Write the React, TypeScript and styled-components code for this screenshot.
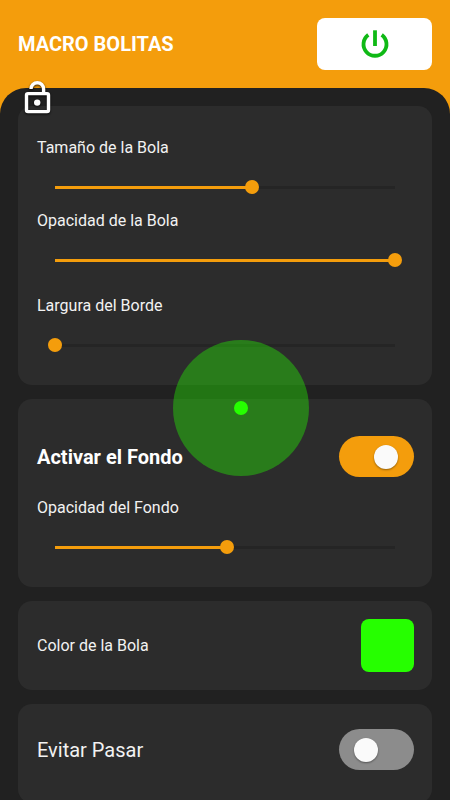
import React, { useId, useState } from "react";
import styled, { createGlobalStyle } from "styled-components";

const ACCENT = "#f49d0c";
const BALL = "#26ff00";

const GlobalStyle = createGlobalStyle`
  *, *::before, *::after { box-sizing: border-box; }
  body {
    margin: 0;
    background: #212121;
    color: #f2f2f2;
    font-family: Roboto, sans-serif;
  }
  button, input { font: inherit; }
`;

const Screen = styled.div`
  position: relative;
  display: flex;
  flex-direction: column;
  height: 100vh;
  overflow: hidden;
  background: ${ACCENT};
`;

const Header = styled.header`
  display: flex;
  align-items: center;
  justify-content: space-between;
  padding: 18px;
`;

const AppTitle = styled.h1`
  margin: 0;
  color: #fff;
  font-size: 20px;
  line-height: 24px;
  font-weight: 700;
`;

const PowerButton = styled.button`
  display: flex;
  align-items: center;
  justify-content: center;
  width: 115px;
  height: 52px;
  padding: 0;
  border: 0;
  border-radius: 8px;
  background: #fff;
  color: #0fb915;
  cursor: pointer;
`;

const Panel = styled.main`
  display: flex;
  flex: 1;
  flex-direction: column;
  gap: 14px;
  min-height: 0;
  padding: 18px;
  overflow-y: auto;
  scrollbar-width: none;
  border-radius: 26px 26px 0 0;
  background: #212121;
`;

const Card = styled.section<{ $top: number; $bottom: number }>`
  display: flex;
  flex: none;
  flex-direction: column;
  padding: ${(p) => p.$top}px 18px ${(p) => p.$bottom}px 19px;
  border-radius: 14px;
  background: #2c2c2c;
`;

const Row = styled.div`
  display: flex;
  align-items: center;
  justify-content: space-between;
`;

const Label = styled.label<{ $size?: "large"; $bold?: boolean }>`
  font-size: ${(p) => (p.$size === "large" ? 20 : 16)}px;
  line-height: ${(p) => (p.$size === "large" ? 24 : 20)}px;
  font-weight: ${(p) => (p.$bold ? 700 : 400)};
  color: ${(p) => (p.$bold ? "#fff" : "#f2f2f2")};
`;

const Field = styled.div<{ $gap: number }>`
  display: flex;
  flex-direction: column;
  gap: 22px;
  margin-top: ${(p) => p.$gap}px;
`;

const Range = styled.input`
  --knob: 14px;
  appearance: none;
  height: var(--knob);
  margin: 0 12px 0 11px;
  border-radius: 7px;
  background:
    linear-gradient(${ACCENT}, ${ACCENT}) 7px center / calc((100% - var(--knob)) * var(--fill)) 3px no-repeat,
    linear-gradient(#252525, #252525) 7px center / calc(100% - var(--knob)) 3px no-repeat;
  cursor: pointer;

  &::-webkit-slider-thumb {
    appearance: none;
    width: var(--knob);
    height: var(--knob);
    border: 0;
    border-radius: 50%;
    background: ${ACCENT};
  }
`;

const Toggle = styled.input`
  appearance: none;
  display: flex;
  align-items: center;
  width: 75px;
  height: 41px;
  margin: 0;
  padding-left: 15px;
  border-radius: 21px;
  background: #8c8c8c;
  cursor: pointer;

  &::before {
    content: "";
    width: 24px;
    height: 24px;
    border-radius: 50%;
    background: #fafafa;
    box-shadow: 0 1px 2px rgba(0, 0, 0, 0.4);
  }
  &:checked {
    padding-left: 35px;
    background: ${ACCENT};
  }
`;

const Swatch = styled.button`
  width: 53px;
  height: 53px;
  padding: 0;
  border: 0;
  border-radius: 8px;
  background: ${BALL};
  cursor: pointer;
`;

const LockButton = styled.button`
  position: absolute;
  top: 79px;
  left: 18px;
  display: flex;
  padding: 0;
  border: 0;
  background: none;
  color: #fff;
  cursor: pointer;

  svg { filter: drop-shadow(0 1px 1px rgba(0, 0, 0, 0.8)); }
`;

const FloatingBall = styled.div`
  position: absolute;
  top: 340px;
  left: 173px;
  display: grid;
  place-items: center;
  width: 136px;
  height: 136px;
  border-radius: 50%;
  background: rgba(38, 255, 0, 0.38);
  pointer-events: none;

  &::before {
    content: "";
    width: 14px;
    height: 14px;
    border-radius: 50%;
    background: ${BALL};
  }
`;

function Slider({ label, initial, gap }: { label: string; initial: number; gap: number }) {
  const id = useId();
  const [value, setValue] = useState(initial);
  return (
    <Field $gap={gap}>
      <Label htmlFor={id}>{label}</Label>
      <Range
        id={id}
        type="range"
        min={0}
        max={255}
        value={value}
        onChange={(e) => setValue(Number(e.target.value))}
        style={{ "--fill": value / 255 } as React.CSSProperties}
      />
    </Field>
  );
}

function PowerIcon() {
  return (
    <svg width="36" height="36" viewBox="0 0 36 36" fill="none" stroke="currentColor" strokeWidth="3.8" aria-hidden="true">
      <path d="M18 4.3V20" />
      <path d="M11.3 8.9A11.5 11.5 0 1 0 24.7 8.9" />
    </svg>
  );
}

function LockOpenIcon() {
  return (
    <svg width="38" height="38" viewBox="0 0 38 38" fill="none" stroke="currentColor" strokeWidth="3.4" aria-hidden="true">
      <rect x="8.5" y="14.6" width="22" height="18" rx="1.5" />
      <path d="M13 10a6.3 6.3 0 0 1 12.6 0v5" />
      <circle cx="19.2" cy="23.6" r="3.2" fill="currentColor" stroke="none" />
    </svg>
  );
}

export default function App() {
  return (
    <>
      <GlobalStyle />
      <Screen>
        <Header>
          <AppTitle>MACRO BOLITAS</AppTitle>
          <PowerButton type="button" aria-label="Encender">
            <PowerIcon />
          </PowerButton>
        </Header>
        <Panel>
          <Card $top={32} $bottom={33}>
            <Slider label="Tamaño de la Bola" initial={148} gap={0} />
            <Slider label="Opacidad de la Bola" initial={255} gap={17} />
            <Slider label="Largura del Borde" initial={0} gap={29} />
          </Card>
          <Card $top={37} $bottom={33}>
            <Row>
              <Label htmlFor="fondo" $size="large" $bold>Activar el Fondo</Label>
              <Toggle id="fondo" type="checkbox" role="switch" defaultChecked />
            </Row>
            <Slider label="Opacidad del Fondo" initial={129} gap={21} />
          </Card>
          <Card $top={18} $bottom={18}>
            <Row>
              <Label htmlFor="color">Color de la Bola</Label>
              <Swatch id="color" type="button" />
            </Row>
          </Card>
          <Card $top={25} $bottom={33}>
            <Row>
              <Label htmlFor="evitar" $size="large">Evitar Pasar</Label>
              <Toggle id="evitar" type="checkbox" role="switch" />
            </Row>
          </Card>
        </Panel>
        <LockButton type="button" aria-label="Desbloqueado">
          <LockOpenIcon />
        </LockButton>
        <FloatingBall />
      </Screen>
    </>
  );
}
